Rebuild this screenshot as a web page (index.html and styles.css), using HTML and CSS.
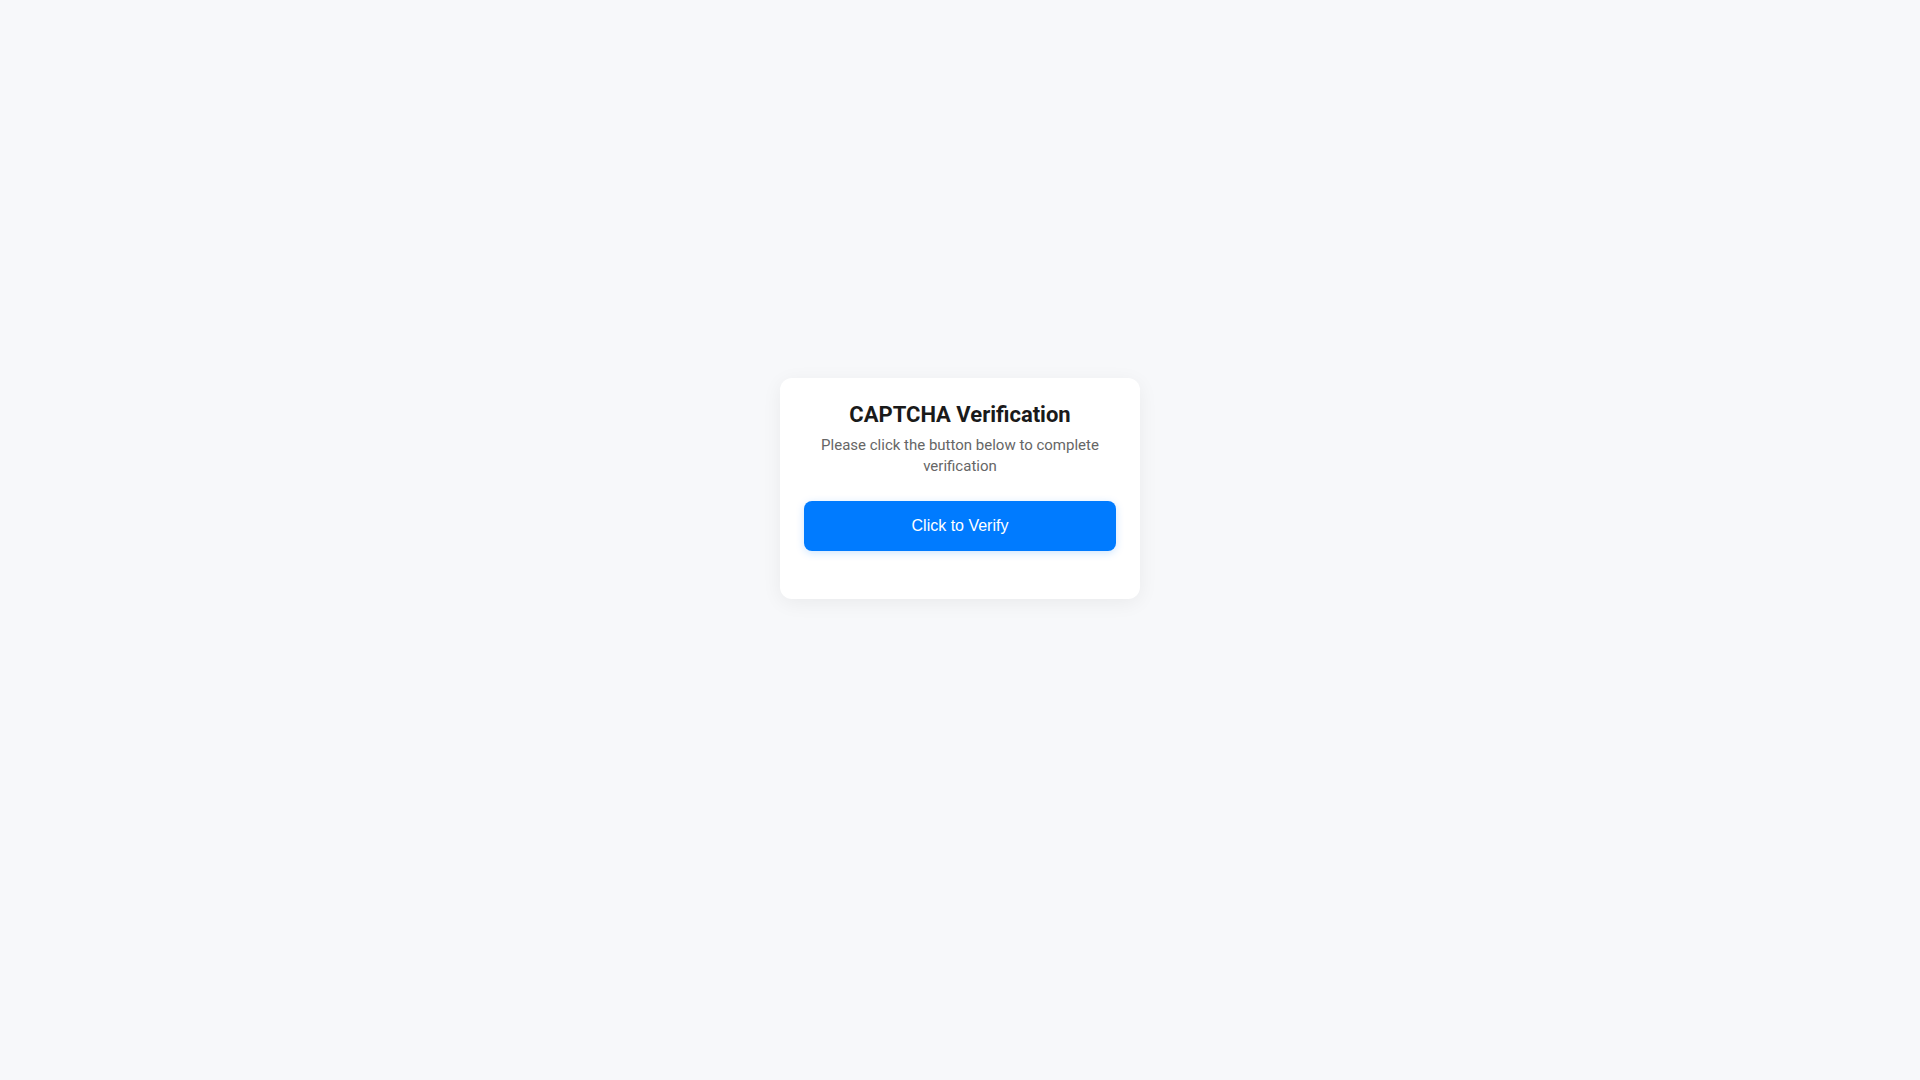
FILE: index.html
```html
<!DOCTYPE html>
<html lang="en">
<head>
<meta charset="utf-8">
<title>CAPTCHA Verification</title>
<link rel="stylesheet" href="styles.css">
</head>
<body>
<main class="page">
  <section class="card">
    <h1 class="title">CAPTCHA Verification</h1>
    <p class="subtitle">Please click the button below to complete verification</p>
    <button class="verify-btn" type="button">Click to Verify</button>
    <div class="result"></div>
  </section>
</main>
</body>
</html>
```

FILE: styles.css
```css
html, body {
  margin: 0;
  padding: 0;
}

::-webkit-scrollbar {
  width: 6px;
}

::-webkit-scrollbar-track {
  background: #f7f8fa;
}

::-webkit-scrollbar-thumb {
  background: #c1c1c1;
  border-radius: 3px;
}

body {
  background: #f7f8fa;
  font-family: Roboto, "Liberation Sans", Arial, sans-serif;
  color: #1a1a1a;
}

.page {
  box-sizing: border-box;
  min-height: calc(100vh + 33px);
  padding: 0 0 136px 0;
  display: flex;
  align-items: center;
  justify-content: center;
}

.card {
  box-sizing: border-box;
  width: 360px;
  padding: 24px;
  background: #ffffff;
  border-radius: 12px;
  box-shadow: 0 4px 20px rgba(0, 0, 0, 0.06);
  display: flex;
  flex-direction: column;
  align-items: stretch;
  text-align: center;
}

.title {
  margin: 0;
  font-size: 22px;
  font-weight: 700;
  line-height: normal;
  color: #1a1a1a;
}

.subtitle {
  margin: 8px 0 24px;
  font-size: 15px;
  line-height: 21px;
  color: #666666;
}

.verify-btn {
  display: block;
  width: 100%;
  padding: 16px;
  border: none;
  border-radius: 8px;
  background: #007bff;
  color: #ffffff;
  font-family: "Liberation Sans", Arial, sans-serif;
  font-size: 16px;
  line-height: 18px;
  cursor: pointer;
  box-shadow: 0 2px 8px rgba(0, 123, 255, 0.2);
}

.result {
  margin-top: 24px;
}
```
